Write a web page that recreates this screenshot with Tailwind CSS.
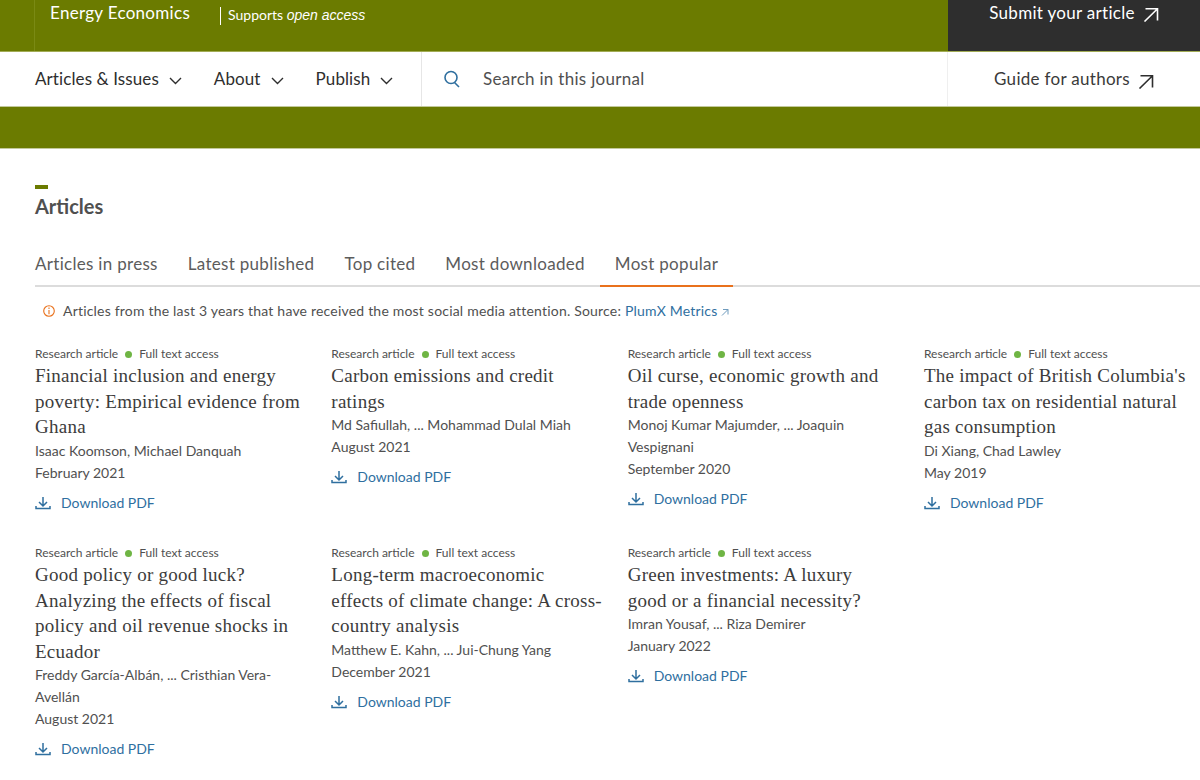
<!DOCTYPE html>
<html lang="en">
<head>
<meta charset="utf-8">
<script src="https://cdn.jsdelivr.net/npm/@tailwindcss/browser@4"></script>
<title>Energy Economics</title>
</head>
<body class="w-[1200px] h-[780px] overflow-hidden bg-white font-['Lato',sans-serif] text-[#505050]">
<header class="flex h-[52px] bg-[#6b7b00] border-b border-[#a2ac55]">
  <div class="w-[35px] border-r border-[#7a8a14]"></div>
  <div class="flex flex-1 items-start pt-[3px] pl-[15px] text-white">
    <span class="text-[17px] leading-[20px] tracking-[0.3px]">Energy Economics</span>
    <span class="ml-[30px] mt-[4px] h-[18px] border-l border-white"></span>
    <span class="ml-[7px] mt-[4px] text-[14px] leading-[16px]">Supports <i class="font-['Liberation_Sans',sans-serif]">open access</i></span>
  </div>
  <div class="w-[252px] bg-[#2e2e2e] flex items-start justify-center pt-[3px] text-white">
    <span class="text-[17px] leading-[20px] tracking-[0.3px]">Submit your article</span>
    <svg class="ml-[8px] mt-[3px]" width="16" height="16" viewBox="0 0 16 16" fill="none" stroke="white" stroke-width="1.6"><path d="M2.5 2.8H14.5V14.5M14.5 2.8L1.5 15.5"/></svg>
  </div>
</header>
<nav class="flex h-[55px] border-b border-[#c3c99b] text-[#2e2e2e]">
  <div class="w-[422px] flex items-center pl-[35px] border-r border-[#e6e6e6]">
    <span class="text-[17px] tracking-[0.1px]">Articles &amp; Issues</span>
    <svg class="ml-[10px] mt-[4px]" width="13" height="8" viewBox="0 0 13 8" fill="none" stroke="#2e2e2e" stroke-width="1.4"><path d="M1 1L6.5 6.5L12 1"/></svg>
    <span class="ml-[32px] text-[17px] tracking-[0.1px]">About</span>
    <svg class="ml-[10px] mt-[4px]" width="13" height="8" viewBox="0 0 13 8" fill="none" stroke="#2e2e2e" stroke-width="1.4"><path d="M1 1L6.5 6.5L12 1"/></svg>
    <span class="ml-[32px] text-[17px] tracking-[0.1px]">Publish</span>
    <svg class="ml-[10px] mt-[4px]" width="13" height="8" viewBox="0 0 13 8" fill="none" stroke="#2e2e2e" stroke-width="1.4"><path d="M1 1L6.5 6.5L12 1"/></svg>
  </div>
  <div class="flex flex-1 items-center pl-[21px] border-r border-[#efefef]">
    <svg width="18" height="18" viewBox="0 0 18 18" fill="none" stroke="#2f6f9f" stroke-width="1.6"><circle cx="8" cy="7.5" r="6"/><path d="M11.5 12.5L16 17"/></svg>
    <span class="ml-[22px] text-[17px] tracking-[0.3px] text-[#505050]">Search in this journal</span>
  </div>
  <div class="w-[252px] flex items-center justify-center">
    <span class="text-[17px] tracking-[0.3px] text-[#3a3a3a]">Guide for authors</span>
    <svg class="ml-[8px] mt-[3px]" width="16" height="16" viewBox="0 0 16 16" fill="none" stroke="#2e2e2e" stroke-width="1.6"><path d="M2.5 2.8H14.5V14.5M14.5 2.8L1.5 15.5"/></svg>
  </div>
</nav>
<div class="h-[42px] bg-[#6b7b00] border-b border-[#c3c99b]"></div>
<main class="pl-[35px]">
  <div class="mt-[36px] w-[13px] h-[4px] bg-[#6b7b00]"></div>
  <h2 class="mt-[4px] text-[20px] leading-[26px] font-bold text-[#505050]">Articles</h2>
  <div class="mt-[28px] flex h-[40px] border-b-2 border-[#dcdcdc] text-[17px] tracking-[0.3px] text-[#5c5c5c]">
    <a class="h-[40px] pt-[4px] mr-[30px]">Articles in press</a>
    <a class="h-[40px] pt-[4px] mr-[30px]">Latest published</a>
    <a class="h-[40px] pt-[4px] mr-[30px]">Top cited</a>
    <a class="h-[40px] pt-[4px] mr-[15px]">Most downloaded</a>
    <a class="h-[40px] pt-[4px] px-[15px] border-b-2 border-[#e9711c]">Most popular</a>
  </div>
  <p class="mt-[14px] ml-[8px] flex items-center text-[14px] leading-[20px] tracking-[0.2px] text-[#505050]">
    <svg width="12" height="12" viewBox="0 0 12 12" fill="none" stroke="#e9711c" stroke-width="1.1"><circle cx="6" cy="6" r="5.3"/><path d="M6 5V9.2M6 2.6V4"/></svg>
    <span class="ml-[8px]">Articles from the last 3 years that have received the most social media attention. Source: <a class="text-[#2f6f9f]">PlumX Metrics</a></span>
    <svg class="ml-[4px] mt-[2px]" width="8" height="8" viewBox="0 0 8 8" fill="none" stroke="#6f9bbd" stroke-width="1"><path d="M2 1.5H7V6.5M7 1.5L1 7.5"/></svg>
  </p>
  <div class="mt-[25px] grid grid-cols-[repeat(4,296.33px)] grid-rows-[199px_auto]">
    <article>
      <div class="flex items-center text-[12px] leading-[16px]">Research article<span class="mx-[7px] w-[7px] h-[7px] rounded-full bg-[#6fb544]"></span>Full text access</div>
      <h3 class="mt-[1px] whitespace-nowrap font-['Liberation_Serif',serif] text-[19px] leading-[25.6px] tracking-[0.25px] text-[#3c3c3c]">Financial inclusion and energy<br>poverty: Empirical evidence from<br>Ghana</h3>
      <p class="text-[14px] leading-[22px] text-[#505050] whitespace-nowrap">Isaac Koomson, Michael Danquah<br>February 2021</p>
      <a class="mt-[8px] flex items-center text-[14px] leading-[22px] text-[#2f6f9f]"><svg class="mr-[10px]" width="16" height="14" viewBox="0 0 16 14" fill="none" stroke="#2f6f9f" stroke-width="1.5"><path d="M8 1V9.5M4 6L8 10L12 6M1 10V12.5H15V10"/></svg>Download PDF</a>
    </article>
    <article>
      <div class="flex items-center text-[12px] leading-[16px]">Research article<span class="mx-[7px] w-[7px] h-[7px] rounded-full bg-[#6fb544]"></span>Full text access</div>
      <h3 class="mt-[1px] whitespace-nowrap font-['Liberation_Serif',serif] text-[19px] leading-[25.6px] tracking-[0.25px] text-[#3c3c3c]">Carbon emissions and credit<br>ratings</h3>
      <p class="text-[14px] leading-[22px] text-[#505050] whitespace-nowrap">Md Safiullah, ... Mohammad Dulal Miah<br>August 2021</p>
      <a class="mt-[8px] flex items-center text-[14px] leading-[22px] text-[#2f6f9f]"><svg class="mr-[10px]" width="16" height="14" viewBox="0 0 16 14" fill="none" stroke="#2f6f9f" stroke-width="1.5"><path d="M8 1V9.5M4 6L8 10L12 6M1 10V12.5H15V10"/></svg>Download PDF</a>
    </article>
    <article>
      <div class="flex items-center text-[12px] leading-[16px]">Research article<span class="mx-[7px] w-[7px] h-[7px] rounded-full bg-[#6fb544]"></span>Full text access</div>
      <h3 class="mt-[1px] whitespace-nowrap font-['Liberation_Serif',serif] text-[19px] leading-[25.6px] tracking-[0.25px] text-[#3c3c3c]">Oil curse, economic growth and<br>trade openness</h3>
      <p class="text-[14px] leading-[22px] text-[#505050] whitespace-nowrap">Monoj Kumar Majumder, ... Joaquin<br>Vespignani<br>September 2020</p>
      <a class="mt-[8px] flex items-center text-[14px] leading-[22px] text-[#2f6f9f]"><svg class="mr-[10px]" width="16" height="14" viewBox="0 0 16 14" fill="none" stroke="#2f6f9f" stroke-width="1.5"><path d="M8 1V9.5M4 6L8 10L12 6M1 10V12.5H15V10"/></svg>Download PDF</a>
    </article>
    <article>
      <div class="flex items-center text-[12px] leading-[16px]">Research article<span class="mx-[7px] w-[7px] h-[7px] rounded-full bg-[#6fb544]"></span>Full text access</div>
      <h3 class="mt-[1px] whitespace-nowrap font-['Liberation_Serif',serif] text-[19px] leading-[25.6px] tracking-[0.25px] text-[#3c3c3c]">The impact of British Columbia's<br>carbon tax on residential natural<br>gas consumption</h3>
      <p class="text-[14px] leading-[22px] text-[#505050] whitespace-nowrap">Di Xiang, Chad Lawley<br>May 2019</p>
      <a class="mt-[8px] flex items-center text-[14px] leading-[22px] text-[#2f6f9f]"><svg class="mr-[10px]" width="16" height="14" viewBox="0 0 16 14" fill="none" stroke="#2f6f9f" stroke-width="1.5"><path d="M8 1V9.5M4 6L8 10L12 6M1 10V12.5H15V10"/></svg>Download PDF</a>
    </article>
    <article>
      <div class="flex items-center text-[12px] leading-[16px]">Research article<span class="mx-[7px] w-[7px] h-[7px] rounded-full bg-[#6fb544]"></span>Full text access</div>
      <h3 class="mt-[1px] whitespace-nowrap font-['Liberation_Serif',serif] text-[19px] leading-[25.6px] tracking-[0.25px] text-[#3c3c3c]">Good policy or good luck?<br>Analyzing the effects of fiscal<br>policy and oil revenue shocks in<br>Ecuador</h3>
      <p class="text-[14px] leading-[22px] text-[#505050] whitespace-nowrap">Freddy García-Albán, ... Cristhian Vera-<br>Avellán<br>August 2021</p>
      <a class="mt-[8px] flex items-center text-[14px] leading-[22px] text-[#2f6f9f]"><svg class="mr-[10px]" width="16" height="14" viewBox="0 0 16 14" fill="none" stroke="#2f6f9f" stroke-width="1.5"><path d="M8 1V9.5M4 6L8 10L12 6M1 10V12.5H15V10"/></svg>Download PDF</a>
    </article>
    <article>
      <div class="flex items-center text-[12px] leading-[16px]">Research article<span class="mx-[7px] w-[7px] h-[7px] rounded-full bg-[#6fb544]"></span>Full text access</div>
      <h3 class="mt-[1px] whitespace-nowrap font-['Liberation_Serif',serif] text-[19px] leading-[25.6px] tracking-[0.25px] text-[#3c3c3c]">Long-term macroeconomic<br>effects of climate change: A cross-<br>country analysis</h3>
      <p class="text-[14px] leading-[22px] text-[#505050] whitespace-nowrap">Matthew E. Kahn, ... Jui-Chung Yang<br>December 2021</p>
      <a class="mt-[8px] flex items-center text-[14px] leading-[22px] text-[#2f6f9f]"><svg class="mr-[10px]" width="16" height="14" viewBox="0 0 16 14" fill="none" stroke="#2f6f9f" stroke-width="1.5"><path d="M8 1V9.5M4 6L8 10L12 6M1 10V12.5H15V10"/></svg>Download PDF</a>
    </article>
    <article>
      <div class="flex items-center text-[12px] leading-[16px]">Research article<span class="mx-[7px] w-[7px] h-[7px] rounded-full bg-[#6fb544]"></span>Full text access</div>
      <h3 class="mt-[1px] whitespace-nowrap font-['Liberation_Serif',serif] text-[19px] leading-[25.6px] tracking-[0.25px] text-[#3c3c3c]">Green investments: A luxury<br>good or a financial necessity?</h3>
      <p class="text-[14px] leading-[22px] text-[#505050] whitespace-nowrap">Imran Yousaf, ... Riza Demirer<br>January 2022</p>
      <a class="mt-[8px] flex items-center text-[14px] leading-[22px] text-[#2f6f9f]"><svg class="mr-[10px]" width="16" height="14" viewBox="0 0 16 14" fill="none" stroke="#2f6f9f" stroke-width="1.5"><path d="M8 1V9.5M4 6L8 10L12 6M1 10V12.5H15V10"/></svg>Download PDF</a>
    </article>
  </div>
</main>
</body>
</html>
